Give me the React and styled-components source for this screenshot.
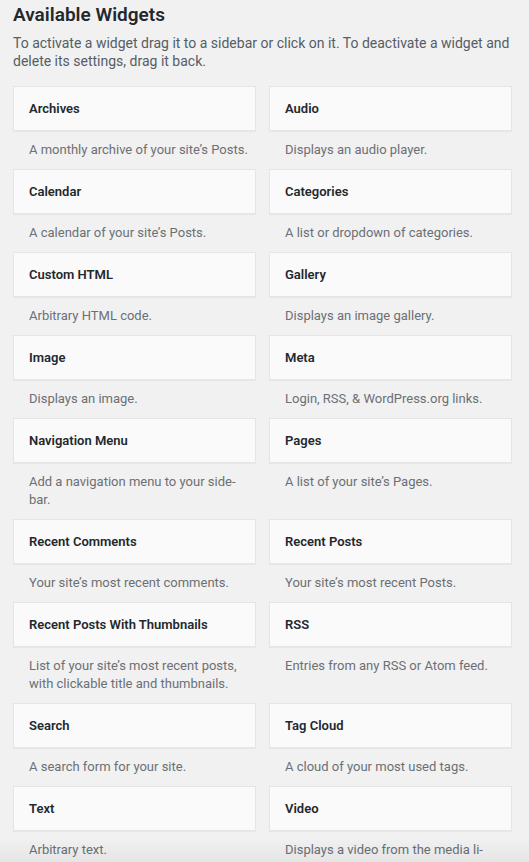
import React from 'react';
import styled, { createGlobalStyle } from 'styled-components';

const widgets = [
  ['Archives', 'A monthly archive of your site’s Posts.'],
  ['Audio', 'Displays an audio player.'],
  ['Calendar', 'A calendar of your site’s Posts.'],
  ['Categories', 'A list or dropdown of categories.'],
  ['Custom HTML', 'Arbitrary HTML code.'],
  ['Gallery', 'Displays an image gallery.'],
  ['Image', 'Displays an image.'],
  ['Meta', 'Login, RSS, & WordPress.org links.'],
  ['Navigation Menu', 'Add a navigation menu to your side\u00ADbar.'],
  ['Pages', 'A list of your site’s Pages.'],
  ['Recent Comments', 'Your site’s most recent comments.'],
  ['Recent Posts', 'Your site’s most recent Posts.'],
  ['Recent Posts With Thumbnails', 'List of your site’s most recent posts, with clickable title and thumbnails.'],
  ['RSS', 'Entries from any RSS or Atom feed.'],
  ['Search', 'A search form for your site.'],
  ['Tag Cloud', 'A cloud of your most used tags.'],
  ['Text', 'Arbitrary text.'],
  ['Video', 'Displays a video from the media li\u00ADbrary.'],
];

const GlobalStyle = createGlobalStyle`
  html, body {
    margin: 0;
    background: #f1f1f1;
  }
  body {
    font-family: Roboto, "Liberation Sans", sans-serif;
    overflow: hidden;
  }
`;

const Page = styled.div`
  position: relative;
  height: 862px;
  overflow: hidden;
  padding: 0 17px 0 13px;

  /* soft shading along the bottom edge, as in the screenshot */
  &::after {
    content: '';
    position: absolute;
    left: 0;
    right: 0;
    bottom: 0;
    height: 24px;
    background: linear-gradient(rgba(0, 0, 0, 0), rgba(0, 0, 0, 0.05));
    pointer-events: none;
  }
`;

const Heading = styled.h2`
  margin: 0;
  padding-top: 3px;
  font-size: 19px;
  line-height: 24px;
  font-weight: 600;
  color: #23282d;
`;

const Intro = styled.p`
  margin: 7px 0 0;
  font-size: 14px;
  line-height: 18px;
  color: #555d66;
`;

const Grid = styled.div`
  display: grid;
  grid-template-columns: 243px 243px;
  column-gap: 13px;
  margin-top: 16px;
`;

const Widget = styled.div`
  display: flex;
  flex-direction: column;
`;

const Card = styled.div`
  background: #fafafa;
  border: 1px solid #e5e5e5;
  box-shadow: 0 1px 1px rgba(0, 0, 0, 0.04);
`;

const Title = styled.h3`
  margin: 0;
  padding: 15px;
  font-size: 13px;
  line-height: 13px;
  font-weight: 600;
  color: #23282d;
`;

const Description = styled.div`
  padding: 10px 6px 10px 16px;
  font-size: 13px;
  line-height: 18px;
  color: #6b7075;
`;

export default function App() {
  return (
    <>
      <GlobalStyle />
      <Page>
        <Heading>Available Widgets</Heading>
        <Intro>
          To activate a widget drag it to a sidebar or click on it. To deactivate a widget and
          delete its settings, drag it back.
        </Intro>
        <Grid>
          {widgets.map(([name, desc]) => (
            <Widget key={name}>
              <Card>
                <Title>{name}</Title>
              </Card>
              <Description>{desc}</Description>
            </Widget>
          ))}
        </Grid>
      </Page>
    </>
  );
}
